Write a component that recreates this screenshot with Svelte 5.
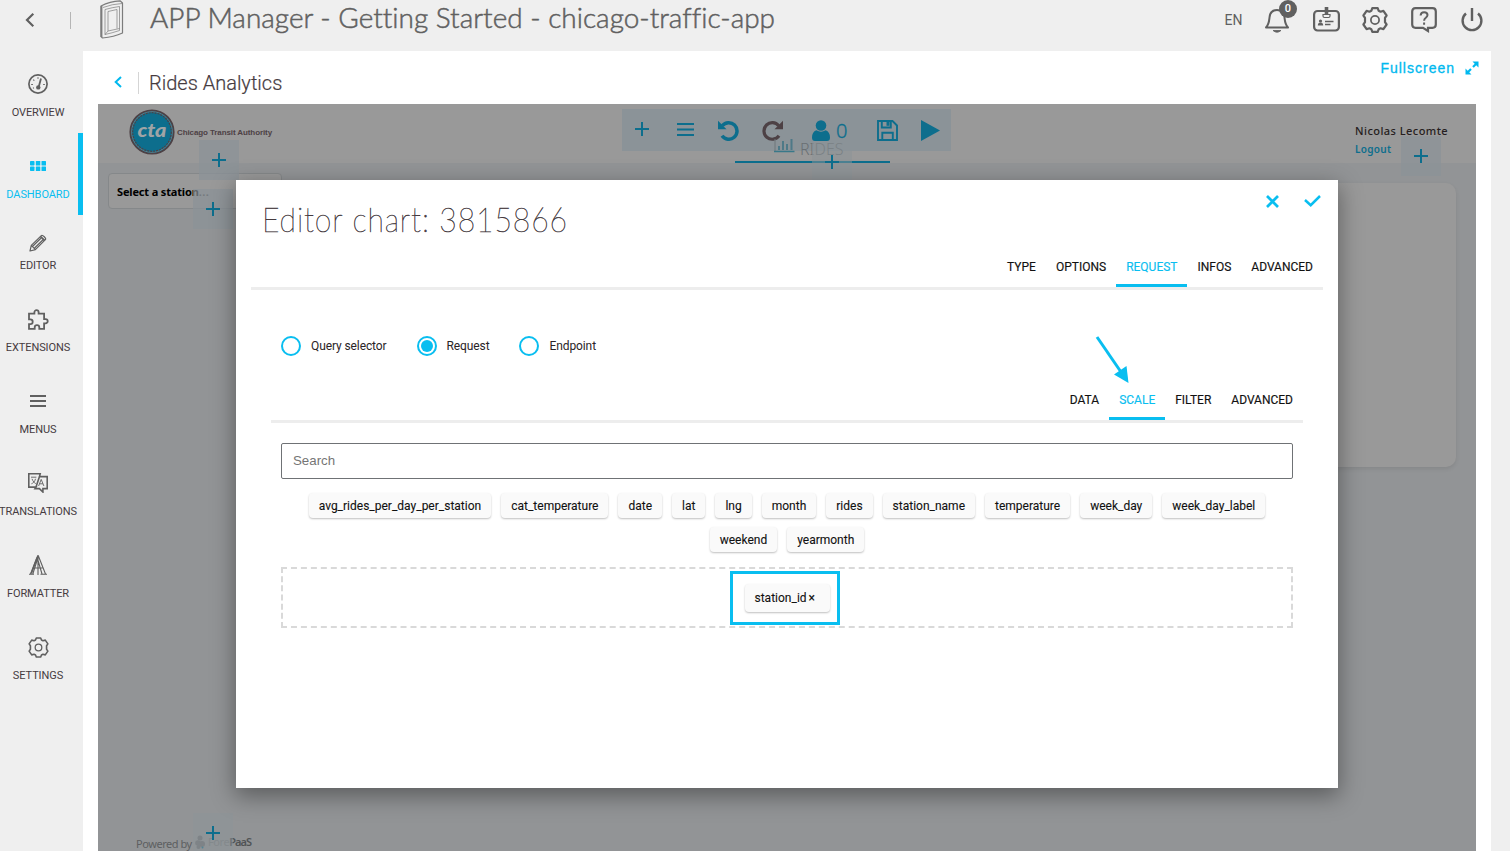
<script>
  const nav = [
    { id: 'overview', label: 'OVERVIEW' },
    { id: 'dashboard', label: 'DASHBOARD', active: true },
    { id: 'editor', label: 'EDITOR', short: true },
    { id: 'extensions', label: 'EXTENSIONS' },
    { id: 'menus', label: 'MENUS' },
    { id: 'translations', label: 'TRANSLATIONS' },
    { id: 'formatter', label: 'FORMATTER' },
    { id: 'settings', label: 'SETTINGS' }
  ];
  const mainTabs = ['TYPE', 'OPTIONS', 'REQUEST', 'INFOS', 'ADVANCED'];
  const subTabs = ['DATA', 'SCALE', 'FILTER', 'ADVANCED'];
  const sources = ['Query selector', 'Request', 'Endpoint'];
  const fields = [
    'avg_rides_per_day_per_station', 'cat_temperature', 'date', 'lat', 'lng', 'month', 'rides',
    'station_name', 'temperature', 'week_day', 'week_day_label', 'weekend', 'yearmonth'
  ];
  let mainTab = $state('REQUEST');
  let subTab = $state('SCALE');
  let source = $state('Request');
</script>

{#snippet gear(size, w)}
  <svg width={size} height={size} viewBox="0 0 26 26" fill="none" stroke="currentColor" stroke-width={w} stroke-linejoin="round">
    <path d="M9.300 3.800 10.300 1.200h5.400l1 2.600 1.800.9 2.900-.8 3.200 4.600-1.600 2.300v4.400l1.600 2.300-3.200 4.600-2.900-.8-1.800.9-1 2.600h-5.400l-1-2.600-1.800-.9-2.900.8-3.200-4.600L3 15.200v-4.400L1.400 8.500l3.200-4.600 2.900.8z" />
    <circle cx="13" cy="13" r="4.1" stroke-width={w * 0.8} />
  </svg>
{/snippet}

{#snippet plus()}
  <svg width="14" height="14" viewBox="0 0 14 14" stroke="currentColor" stroke-width="2"><path d="M7 0v14M0 7h14" /></svg>
{/snippet}

{#snippet navIcon(id)}
  {#if id === 'overview'}
    <svg width="20" height="20" viewBox="0 0 20 20" fill="none" stroke="currentColor">
      <circle cx="10" cy="10" r="9.1" stroke-width="1.7" />
      <path d="M13 4.600 10.700 13" stroke-width="1.800" /><circle cx="10.300" cy="13.400" r="2.200" fill="currentColor" stroke="none" />
      <path d="M3.2 10.5h1.7M15.2 10.5h1.6M5.3 5.6l1 1M10 3.2v1.5M5 14.2l.9-.5" stroke-width="1.100" />
    </svg>
  {:else if id === 'dashboard'}
    <svg width="16" height="10" viewBox="0 0 16 10" fill="currentColor">
      <rect width="4.5" height="4.5" rx=".7" /><rect x="5.8" width="4.5" height="4.5" rx=".5" /><rect x="11.5" width="4.5" height="4.5" rx=".5" />
      <rect y="5.5" width="4.5" height="4.5" rx=".7" /><rect x="5.8" y="5.5" width="4.5" height="4.5" rx=".5" /><rect x="11.5" y="5.5" width="4.5" height="4.5" rx=".5" />
    </svg>
  {:else if id === 'editor'}
    <svg width="18" height="18" viewBox="0 0 18 18" fill="none" stroke="currentColor" stroke-width="1.2" stroke-linejoin="round">
      <path d="M1 17l1.3-5.6L12.3 1.6c1.2-1.2 5.400 2.800 4.100 4.100L6.400 15.600zM2.300 11.400l4.100 4.200M3.700 12.200l8.200-8M5.600 14l8.200-8" />
      <path d="M11.600 2.600l3.900 3.900" stroke-width="1.800" />
    </svg>
  {:else if id === 'extensions'}
    <svg width="21" height="21" viewBox="0 0 21 21" fill="none" stroke="currentColor" stroke-width="1.800">
      <path d="M1 4.600h5.400V3.300a2 2 0 0 1 4.200 0v1.300h5.500v5.500h1.500a2 2 0 0 1 0 4.200h-1.500v5.600h-4.800v-1.400a2.300 2.300 0 0 0-4.600 0v1.400H1v-4.800h1.300a2.400 2.400 0 0 0 0-4.800H1z" />
    </svg>
  {:else if id === 'menus'}
    <svg width="16" height="12" viewBox="0 0 16 12" stroke="currentColor" stroke-width="1.800"><path d="M0 1h16M0 6h16M0 11h16" /></svg>
  {:else if id === 'translations'}
    <svg width="20" height="20" viewBox="0 0 20 20" fill="none" stroke="currentColor" stroke-width="1.600">
      <path d="M.8.8h11.400l-.7 2.800h7.700v12h-4.300V19l-3.500-3.400H7l1-1.500H.8zM11.500 3.600 8 14.100" />
      <path d="M3 4.200h5.400M4 5.800c1 2.800 2.400 4 3.800 4.800M7.500 5.800C7 8.500 5 10.200 3.400 10.800M10.600 13l2.600-6.600 2.700 6.600M11.600 10.800h3.300" stroke-width=".9" />
    </svg>
  {:else if id === 'formatter'}
    <svg width="18" height="20" viewBox="0 0 18 20" fill="none" stroke="currentColor" stroke-width="1.100">
      <path d="M9 0v20M8.700.8 1.500 19M8.800 3 3.800 19M0 19.200h5M3.500 13H9M9.300.8 16.500 19M9.200 6l3.800 13M11.500 19.200H18M9 13h4.500" />
      <path d="M8.200 2.500 2.300 18.500" stroke-width="1.600" />
    </svg>
  {:else}
    {@render gear(21, 2)}
  {/if}
{/snippet}

<div class="app">
  <header class="topbar">
    <button class="back" aria-label="Back"><svg width="10" height="14" viewBox="0 0 10 14" fill="none" stroke="currentColor" stroke-width="2.200"><path d="M8.300.8 2 7l6.300 6.200" /></svg></button>
    <span class="divider"></span>
    <svg width="24" height="39" viewBox="0 0 24 39" fill="none" stroke="#7c7c7c" stroke-width="1.200" stroke-linejoin="round">
      <path d="M1 6Q10 1 20 .8L22.500 3v30Q14 37 2.500 38L1 36.500z" />
      <path d="M3 7.500Q12 4 22 3.500M5 9.500Q12 7.500 19.500 6.500V30.500Q12 33 5 34.500zM8 11.500v19.500l11.500-2.500M8 31 5 34.500M8 11.500l9-2v19" stroke-width=".7" />
      <path d="M1.500 6v31" stroke-width="1.800" />
    </svg>
    <svg class="apptitle" width="630" height="40"><text x="0" y="28" textLength="625" lengthAdjust="spacingAndGlyphs">APP Manager - Getting Started - chicago-traffic-app</text></svg>
    <div class="tools">
      <span class="lang">EN</span>
      <span class="bell">
        <svg width="24" height="26" viewBox="0 0 24 26" fill="none" stroke="currentColor" stroke-width="2" stroke-linejoin="round"><path d="M1 20.500c3-3 3-5 3.500-10C5 5 8 3 12 3s7 2 7.500 7.500c.5 5 .5 7 3.500 10z" /><path d="M8 23.500q4 3.500 8 0z" fill="currentColor" stroke-width=".8" /></svg>
        <b>0</b>
      </span>
      <svg width="27" height="25" viewBox="0 0 27 25" fill="none" stroke="currentColor" stroke-width="2.200">
        <rect x="1.100" y="4" width="24.800" height="19.500" rx="3.500" />
        <path d="M13.500 0v8" stroke-width="3.600" /><path d="M10 7.500v1.500q0 1.500 1.500 1.500h4q1.500 0 1.500-1.500V7.500z" stroke-width="1.200" />
        <circle cx="7.500" cy="14" r="1.600" fill="currentColor" stroke="none" /><path d="M4.800 18.500q0-3 2.700-3t2.700 3z" fill="currentColor" stroke="none" />
        <path d="M12 14.500h8.500M12 17.500h5.500" stroke-width="1.300" />
      </svg>
      {@render gear(26, 2.2)}
      <svg class="help" width="26" height="26" viewBox="0 0 26 26" fill="none" stroke="currentColor" stroke-width="2.200"><path d="M4.500 1.200h17q3.300 0 3.300 3.300v13q0 3.300-3.300 3.300H17V24l-5-3.200H4.500q-3.300 0-3.300-3.300v-13q0-3.300 3.300-3.300z" /><path d="M9.600 8.500q.2-3.300 3.500-3.300 3.400 0 3.400 2.900 0 1.400-1.700 2.700-1.700 1.200-1.700 2.900M13.100 15.500v2.200" stroke-width="2" /></svg>
      <svg width="22" height="24" viewBox="0 0 22 24" fill="none" stroke="currentColor" stroke-width="2.400"><path d="M5 5.500a9.400 9.400 0 1 0 12 0M11 0v13" /></svg>
    </div>
  </header>

  <div class="body">
    <nav>
      {#each nav as item}
        <a class:active={item.active} class:short={item.short} href="#{item.id}">
          <span class="ico">{@render navIcon(item.id)}</span>
          <span class="lbl">{item.label}</span>
        </a>
      {/each}
    </nav>

    <main>
      <div class="pagehead">
        <svg width="8" height="12" viewBox="0 0 8 12" fill="none" stroke="#00b9ef" stroke-width="2"><path d="M7 1 1.700 6 7 11" /></svg>
        <span class="sep"></span>
        <h2>Rides Analytics</h2>
        <a class="full" href="#full">Fullscreen
          <svg width="14" height="14" viewBox="0 0 14 14" fill="currentColor"><path d="M7.500.5h6v6zM.5 7.500v6h6z" /><path d="M12 2 8 6M6 8 2 12" stroke="currentColor" stroke-width="2.200" /></svg>
        </a>
      </div>

      <section class="board">
        <div class="boardtop">
          <div class="cta">
            <svg width="46" height="46" viewBox="0 0 46 46">
              <circle cx="23" cy="23" r="21.700" fill="#0d6e8d" stroke="#4d4145" stroke-width="1.800" />
              <circle cx="23" cy="23" r="20.300" fill="none" stroke="#8d8d8f" stroke-width=".6" />
              <circle cx="23" cy="23" r="19.300" fill="none" stroke="#4d4145" stroke-width="1.200" stroke-dasharray="2 1" />
              <text x="23" y="28" text-anchor="middle" textLength="29" lengthAdjust="spacingAndGlyphs">cta</text>
            </svg>
            <span>Chicago Transit Authority</span>
          </div>
          <div class="user"><strong>Nicolas Lecomte</strong><a href="#logout">Logout</a></div>
        </div>
        <div class="toolbar">
          <span class="tplus">{@render plus()}</span>
          <svg class="tmenu" width="17" height="13" viewBox="0 0 17 13" stroke="currentColor" stroke-width="2"><path d="M0 1h17M0 6.500h17M0 12h17" /></svg>
          <svg class="undo" width="21" height="21" viewBox="0 0 21 21" fill="none" stroke="currentColor" stroke-width="3.500"><path d="M4.300 5.700A8.300 8.300 0 1 1 4 15.800" /><path d="M0 .8v8.500h8.500z" fill="currentColor" stroke="none" /></svg>
          <svg class="redo" width="21" height="21" viewBox="0 0 21 21" fill="none" stroke="currentColor" stroke-width="3.200"><path d="M16.700 5.700A8.300 8.300 0 1 0 17 15.800" /><path d="M21 .8v8.500h-8.500z" fill="currentColor" stroke="none" /></svg>
          <span class="count"><svg width="18" height="21" viewBox="0 0 18 21" fill="currentColor"><circle cx="9" cy="5.500" r="5.300" /><path d="M4.300 10.300Q9 13 13.700 10.300 18 12 18 17.500q0 3.500-3 3.500H3q-3 0-3-3.500 0-5.500 4.300-7.200z" /></svg><i>0</i></span>
          <svg class="save" width="21" height="21" viewBox="0 0 21 21" fill="none" stroke="currentColor" stroke-width="1.900"><path d="M1 1h14.500L20 5.500V20H1zM5.300 20v-7.300h10.500V20M4.800 1v6.500h9V1" /><path d="M9.500 1.500h3v4.300h-3z" fill="currentColor" stroke="none" /></svg>
          <svg width="19" height="21" viewBox="0 0 19 21" fill="currentColor"><path d="M0 0v21l19-10.500z" /></svg>
        </div>
        <div class="rides">
          <svg width="21" height="15" viewBox="0 0 21 15" fill="none" stroke="#397889" stroke-width="1.500"><path d="M1 1v13" stroke="#6e777b" stroke-width="1" /><path d="M0 13.500h20.500" /><path d="M5 12V8M9 12V3M13 12V6M17.500 12V1" stroke="#4e7987" stroke-width="2" /></svg>
          <span>RIDES</span>
        </div>
        <div class="select">Select a station<em>...</em></div>
        <div class="card"></div>
        <span class="add a1">{@render plus()}</span>
        <span class="add a2">{@render plus()}</span>
        <span class="add a3">{@render plus()}</span>
        <span class="add a4">{@render plus()}</span>
        <div class="powered"><span class="by">Powered by</span>
          <svg width="10" height="14" viewBox="0 0 10 14" fill="#707376"><circle cx="5" cy="3" r="2.500" /><circle cx="3" cy="8" r="2.800" /><circle cx="7" cy="9" r="3" /><circle cx="3.500" cy="12" r="2" /><circle cx="7.500" cy="12.500" r="1" fill="#1d7591" /></svg>
          <span class="fore">Fore</span><b>PaaS</b>
        </div>
        <span class="add a5">{@render plus()}</span>
      </section>
    </main>
  </div>

  <div class="modal" role="dialog" aria-label="Editor chart">
    <div class="modalhead">
      <svg class="mtitle" width="310" height="50"><text x="0" y="38" textLength="306" lengthAdjust="spacingAndGlyphs">Editor chart: 3815866</text></svg>
      <div class="acts">
        <svg width="13" height="13" viewBox="0 0 13 13" stroke="currentColor" stroke-width="2.700"><path d="M1 1l11 11M12 1 1 12" /></svg>
        <svg width="17" height="12" viewBox="0 0 17 12" fill="none" stroke="currentColor" stroke-width="2.500"><path d="M1 5l5.700 5.200L16 1" /></svg>
      </div>
    </div>
    <div class="tabs">
      {#each mainTabs as t}<button class:on={t === mainTab} onclick={() => (mainTab = t)}>{t}</button>{/each}
    </div>
    <div class="inner">
      <div class="radios">
        {#each sources as s}
          <label><input type="radio" bind:group={source} value={s} /><span class="dot"></span>{s}</label>
        {/each}
      </div>
      <div class="tabs sub">
        {#each subTabs as t}<button class:on={t === subTab} onclick={() => (subTab = t)}>{t}</button>{/each}
      </div>
      <div class="form">
        <input class="search" placeholder="Search" />
        <div class="chips">
          {#each fields as f}<span class="chip">{f}</span>{/each}
        </div>
        <div class="drop"><span class="focus"><span class="chip picked">station_id <small>×</small></span></span></div>
      </div>
    </div>
    <svg class="arrow" width="36" height="50" viewBox="0 0 36 50" fill="#09bef0"><path d="M2 2l24 35" stroke="#09bef0" stroke-width="3" /><path d="M33.500 48 19 39.500 31.500 31z" /></svg>
  </div>
</div>

<style>
  :global(body) { overflow: hidden; }
  .app { position: relative; width: 1510px; height: 851px; overflow: hidden; background: #efefef; font-family: Roboto, sans-serif; color: #463b3f; }
  .app :global(svg) { display: block; flex: none; }
  .app :global(*) { box-sizing: border-box; }
  a { text-decoration: none; color: inherit; }
  button { border: 0; background: none; font: inherit; padding: 0; color: inherit; }

  .topbar { display: flex; height: 51px; color: #606060; }
  .back { width: 10px; height: 14px; margin: 13px 0 0 25px; }
  .divider { width: 1px; height: 17px; margin: 12px 29px 0 35px; background: #b5b5b5; }
  .apptitle { margin-left: 26px; overflow: visible; }
  .apptitle text { font: 300 28px Lato, sans-serif; fill: #606060; stroke: #606060; stroke-width: .5px; font-variant-ligatures: none; }
  .tools { display: flex; align-items: center; height: 39px; margin: 0 27px 0 auto; gap: 22.500px; }
  .lang { font-size: 14px; margin-top: 1px; }
  .bell { position: relative; padding-right: 1px; }
  .bell b { position: absolute; left: 14px; top: -7px; width: 18px; height: 18px; border-radius: 9px; background: #606060; color: #fff; font: 500 11px/18px Roboto, sans-serif; text-align: center; }
  .help { margin-right: 2px; }

  .body { display: flex; height: 800px; }
  nav { width: 83px; flex: none; }
  nav a { display: flex; flex-direction: column; align-items: center; height: 82px; padding: 18px 7px 0 0; }
  nav .ico { display: flex; align-items: center; justify-content: center; height: 30px; color: #606060; }
  nav .lbl { font-size: 11px; line-height: 28px; white-space: nowrap; letter-spacing: -.08px; }
  nav a.short { height: 71px; }
  nav a.short .ico { height: 19px; }
  nav a.active { padding-right: 2px; border-right: 5px solid #09bef0; color: #09bef0; }
  nav a.active .ico { color: #09bef0; }

  main { width: 1408px; background: #fff; padding: 0 15px; }
  .pagehead { display: flex; align-items: flex-start; height: 53px; padding: 25px 0 0 16px; }
  .sep { width: 1px; height: 22px; margin: -4px 10px 0 16px; background: #d5d5d5; }
  h2 { margin: -6px 0 0; font-size: 20px; font-weight: 300; line-height: 26px; color: #463b3f; -webkit-text-stroke: .2px #463b3f; }
  .full { display: flex; align-items: center; gap: 10px; margin: -17px -3px 0 auto; font: 14px/18px "Liberation Sans", Arial, sans-serif; letter-spacing: 1px; color: #00b9ef; -webkit-text-stroke: .3px; }

  .board { position: relative; height: 747px; background: #929496; overflow: hidden; }
  .boardtop { display: flex; justify-content: space-between; height: 59px; background: #999; padding: 5px 30px 0 31px; }
  .cta { display: flex; gap: 2px; align-items: center; height: 46px; font: 700 8px "Liberation Sans", Arial, sans-serif; letter-spacing: -.1px; color: #4d4145; white-space: nowrap; }
  .cta text { font: italic 900 18px Lato, sans-serif; fill: #a0a4a6; letter-spacing: 0; }
  .user { display: flex; flex-direction: column; width: 91px; font: 11px/19px "Noto Sans", sans-serif; padding-top: 12px; white-space: nowrap; }
  .user strong { font-weight: 500; letter-spacing: .45px; color: #251d20; }
  .user a { font-weight: 600; color: #0d6e8d; letter-spacing: .3px; font-size: 10px; }
  .toolbar { position: absolute; left: 524px; top: 5px; width: 329px; height: 42px; background: #8b9398; color: #0d6e8d; display: flex; align-items: flex-start; padding: 11px 0 0 13px; }
  .tplus { margin: 2px 28px 0 0; }
  .tmenu { margin: 3px 24px 0 0; }
  .undo { margin-right: 23px; }
  .redo { color: #4d4145; margin-right: 29px; }
  .count { display: flex; gap: 6px; width: 36px; margin-right: 29px; }
  .count i { font: 300 20px/22px "Noto Sans", sans-serif; -webkit-text-stroke: .3px; }
  .save { margin-right: 23px; }
  .rides { position: absolute; left: 637px; top: 32px; width: 155px; height: 27px; border-bottom: 2px solid #0d6e8d; display: flex; gap: 5px; font: 300 16px/22px "Noto Sans", sans-serif; color: #696f73; padding: 2px 0 0 39px; }
  .select { position: absolute; left: 10px; top: 69px; width: 174px; height: 36px; padding-left: 8px; border: 1px solid #85888a; border-radius: 4px; background: #999; color: #000; font: 700 11px/36px "Noto Sans", sans-serif; letter-spacing: -.16px; }
  .select em { font-style: normal; color: #444; letter-spacing: .5px; }
  .card { position: absolute; right: 20px; top: 79px; width: 1000px; height: 284px; border-radius: 10px; background: #999; box-shadow: 0 2px 4px #00000016; }
  .add { position: absolute; display: grid; place-items: center; width: 40px; height: 40px; background: #8b9398b0; color: #0d6e8d; }
  .a1 { left: 101px; top: 36px; } .a2 { left: 95px; top: 85px; } .a3 { left: 714px; top: 38px; background: #8b939880; } .a4 { left: 1303px; top: 32px; } .a5 { left: 95px; top: 709px; background: #8b939880; }
  .powered { position: absolute; left: 38px; top: 731px; display: flex; font: 11px/18px "Noto Sans", sans-serif; color: #5d5f61; white-space: nowrap; }
  .powered svg { margin: 0 3px 0 5px; }
  .by { width: 54px; letter-spacing: -.45px; }
  .fore { color: #7b7e80; letter-spacing: -.4px; margin-top: -2px; }
  .powered b { font-weight: 600; color: #505355; letter-spacing: -1px; margin-top: -2px; }

  .modal { position: absolute; left: 236px; top: 180px; width: 1102px; height: 608px; padding: 0 15px; background: #fff; box-shadow: 0 7px 22px 1px rgba(0, 0, 0, .38); }
  .modalhead { display: flex; justify-content: space-between; height: 68px; padding: 14px 2px 0 11px; }
  .mtitle { overflow: visible; }
  .mtitle text { font: 100 34px Lato, sans-serif; fill: #463b3f; stroke: #463b3f; stroke-width: .5px; letter-spacing: 1px; }
  .acts { display: flex; gap: 25px; color: #09bef0; padding-top: 1px; }
  .tabs { display: flex; justify-content: flex-end; height: 42px; border-bottom: 3px solid #ededed; }
  .tabs button { padding: 0 10px; height: 39px; border-bottom: 3px solid transparent; font: 12px/38px Roboto, sans-serif; color: #111; -webkit-text-stroke: .15px; }
  .tabs button.on { color: #09bef0; border-color: #09bef0; }
  .inner { padding: 46px 20px 0; }
  .radios { display: flex; gap: 30px; height: 20px; padding-left: 10px; font-size: 12px; line-height: 20px; letter-spacing: -.1px; }
  .radios label { display: flex; gap: 10px; color: #2a2427; }
  .radios input { position: absolute; opacity: 0; width: 0; margin: 0; }
  .dot { width: 20px; height: 20px; border: 2px solid #09bef0; border-radius: 50%; padding: 2px; }
  input:checked + .dot { background: #09bef0 content-box; }
  .sub { margin-top: 25px; }
  .form { padding: 20px 10px 0; }
  .search { display: block; width: 100%; height: 36px; border: 1px solid #6f7275; border-radius: 2px; padding: 0 11px 2px; outline: 0; font: 13.300px "Liberation Sans", Arial, sans-serif; }
  .search::placeholder { color: #757575; }
  .chips { display: flex; flex-wrap: wrap; justify-content: center; gap: 9px 10px; padding: 14px 15px 15px; }
  .chip { height: 25px; padding: 0 10px; border-radius: 4px; background: #fafafa; box-shadow: 0 1px 2px rgba(0, 0, 0, .25); font-size: 12px; line-height: 26px; color: #111; -webkit-text-stroke: .1px; white-space: nowrap; }
  .drop { display: flex; justify-content: center; align-items: center; height: 61px; border: 2px dashed #d9d9d9; padding-right: 4px; }
  .focus { display: grid; place-items: center; width: 110px; height: 54px; border: 3px solid #09bef0; }
  .picked { width: 85px; height: 28px; margin-left: 4px; line-height: 29px; word-spacing: -1px; }
  .picked small { font-size: 12px; }
  .arrow { position: absolute; left: 859px; top: 155px; }
</style>
